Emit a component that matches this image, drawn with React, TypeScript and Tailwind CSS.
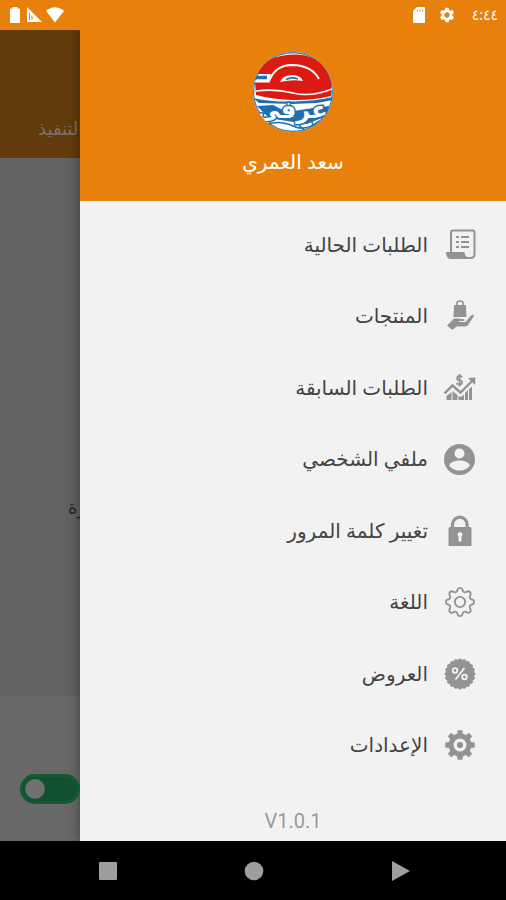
import type { ReactNode } from 'react';
import { BsGear } from 'react-icons/bs';
import { MdSettings } from 'react-icons/md';

interface MenuItem {
  id: string;
  label: string;
  icon: ReactNode;
}

const teeth = [0, 45, 90, 135, 180, 225, 270, 315];

// wavy edge of the offers badge
const badgePoints = Array.from({ length: 40 }, (_, i) => {
  const r = i % 2 === 0 ? 15.2 : 13.8;
  const a = (i * Math.PI) / 20;
  return `${(16 + r * Math.sin(a)).toFixed(2)},${(16 - r * Math.cos(a)).toFixed(2)}`;
}).join(' ');

function OrdersIcon() {
  return (
    <svg viewBox="0 0 32 32" className="size-8" fill="none" stroke="currentColor" strokeWidth="2">
      <path d="M7 23V3.5Q7 1.5 9 1.5H28.5Q30.5 1.5 30.5 3.5V25Q30.5 29 26.5 29H7" />
      <path d="M2 23H20.5Q20.5 27 23.5 28L25 30H7Q2 30 2 23Z" fill="currentColor" stroke="none" />
      <path d="M12 8h3M17 8h8M12 13h3M17 13h8M12 18h3M17 18h8" />
    </svg>
  );
}

function ProductsIcon() {
  return (
    <svg viewBox="0 0 32 32" className="size-8" fill="currentColor">
      <path d="M10 5H22L22.5 17H9.5Z" />
      <path d="M13 6V3Q13 1 16 1T19 3V6" fill="none" stroke="currentColor" strokeWidth="1.6" />
      <path d="M3 25.5L9 19.5Q11 17.8 14 18.5L19 19Q21 19.5 20.5 21H15V22H21.5L26.5 16Q28.5 14 30 15Q30 16 29 17.5L24 25Q23 26.5 21 26.5H12.5L8.5 30Z" />
    </svg>
  );
}

function HistoryIcon() {
  return (
    <svg viewBox="0 0 32 32" className="size-8" fill="currentColor">
      <path d="M2.5 28V24L7.5 20V28ZM8.5 28V19L13.5 23V28ZM14.5 28V24L17 25L20 22.5V28ZM21 28V21L24 18V28ZM25 28V17L28 14.5V28Z" />
      <path d="M0.5 21.5L8.5 13.5L16.5 20.5L28 9" fill="none" stroke="currentColor" strokeWidth="2.4" />
      <path d="M24 6L31.5 5.5L31 13Z" />
      <path
        d="M18 5.5Q17.5 4 15.5 4T13 6.2Q13 7.8 15.5 8.2T18 10.5Q18 12.5 15.5 12.5T12.8 10.8M15.5 2V14.5"
        fill="none"
        stroke="currentColor"
        strokeWidth="1.8"
      />
    </svg>
  );
}

function ProfileIcon() {
  return (
    <svg viewBox="0 0 32 32" className="size-8">
      <circle cx="15.5" cy="16.5" r="15.5" fill="currentColor" />
      <circle cx="15.5" cy="10.5" r="5" fill="#f2f2f2" />
      <path d="M5 22.5Q7.5 17.5 15.5 17.5T26 22.5Q22 27.5 15.5 27.5T5 22.5Z" fill="#f2f2f2" />
    </svg>
  );
}

function LockIcon() {
  return (
    <svg viewBox="0 0 32 32" className="size-8">
      <path d="M8.5 13V9.5a7.3 7.3 0 0 1 14.6 0V13" fill="none" stroke="currentColor" strokeWidth="3.2" />
      <rect x="4.5" y="12" width="23" height="19" rx="1.5" fill="currentColor" />
      <path d="M16 17a2.500 2.500 0 0 1 1.500 4.500v5h-3v-5a2.500 2.500 0 0 1 1.500-4.500Z" fill="#f2f2f2" />
    </svg>
  );
}

function OffersIcon() {
  return (
    <svg viewBox="0 0 32 32" className="size-8">
      <polygon points={badgePoints} fill="currentColor" stroke="currentColor" strokeLinejoin="round" />
      <g fill="none" stroke="#f2f2f2" strokeWidth="1.8">
        <circle cx="11" cy="12.5" r="2.3" />
        <circle cx="20.5" cy="19" r="2.3" />
        <path d="M20.5 10L11.5 21.5" />
      </g>
    </svg>
  );
}

function SettingsIcon() {
  return (
    <svg viewBox="0 0 32 32" className="size-8">
      <g fill="currentColor">
        <circle cx="16" cy="16" r="11.5" />
        {teeth.map(angle => (
          <path key={angle} d="M13 6L13.6 1.2H18.4L19 6Z" transform={`rotate(${angle} 16 16)`} />
        ))}
      </g>
      <circle cx="16" cy="16" r="4.8" fill="none" stroke="#f2f2f2" strokeWidth="3.4" />
    </svg>
  );
}

function Logo() {
  return (
    <svg viewBox="0 0 80 80" className="size-20" role="img" aria-label="شعار">
      <clipPath id="logo-clip">
        <circle cx="40" cy="40" r="40" />
      </clipPath>
      <g clipPath="url(#logo-clip)">
        <rect width="80" height="80" fill="#fff" />
        <circle cx="40" cy="40" r="39.5" fill="none" stroke="#2b7ab8" strokeWidth="1.5" />
        <path d="M4 22Q13 3 40 2.5T76 24Q80 34 78 44Q60 48.5 40 48T3 43L2 30H15L18 22Z" fill="#dd1a12" />
        <path d="M1 25.5H14" stroke="#1f6fae" strokeWidth="3.5" />
        <path d="M2 29.5H16Q22 13 39 13Q59 13.5 66 27" fill="none" stroke="#fff" strokeWidth="1.8" />
        <path d="M27 30Q30 23 39 23Q48 23.5 50 29Q39 27 27 30Z" fill="#fff" />
        <path d="M33 27.5Q39 24.5 45 27" fill="none" stroke="#1f6fae" strokeWidth="1.6" />
        <path d="M3 39Q22 36.5 40 41T79 37" fill="none" stroke="#fff" strokeWidth="1.6" />
        <path d="M0 46Q18 50 40 49.500T80 45V48L64 51L40 52L6 51Z" fill="#1f6fae" />
        <path d="M4 54L20 53L34 60L60 56L76 54L74 64L54 72L40 70L16 66Z" fill="#1f6fae" />
        <text
          x="39"
          y="66"
          textAnchor="middle"
          className="text-[24px] font-bold [paint-order:stroke]"
          fill="#fff"
          stroke="#1f6fae"
          strokeWidth="3"
        >
          عرفي
        </text>
        <path d="M14 72Q28 68 40 74T66 69M46 73L52 79M58 66L60 74" fill="none" stroke="#1f6fae" strokeWidth="1.5" />
      </g>
    </svg>
  );
}

const items: MenuItem[] = [
  { id: 'current', label: 'الطلبات الحالية', icon: <OrdersIcon /> },
  { id: 'products', label: 'المنتجات', icon: <ProductsIcon /> },
  { id: 'previous', label: 'الطلبات السابقة', icon: <HistoryIcon /> },
  { id: 'profile', label: 'ملفي الشخصي', icon: <ProfileIcon /> },
  { id: 'password', label: 'تغيير كلمة المرور', icon: <LockIcon /> },
  { id: 'language', label: 'اللغة', icon: <BsGear className="size-[30px]" /> },
  { id: 'offers', label: 'العروض', icon: <OffersIcon /> },
  { id: 'settings', label: 'الإعدادات', icon: <SettingsIcon /> },
];

function StatusBar() {
  return (
    <header className="flex h-[30px] items-center justify-between bg-[#e8810c] px-2 text-white">
      <div className="flex items-center gap-1">
        <svg viewBox="0 0 14 18" className="h-[18px] w-3.5" fill="currentColor">
          <path d="M4.5 1h5v1.5H12V17H2V2.5h2.5Z" />
        </svg>
        <svg viewBox="0 0 16 16" className="size-4" fill="currentColor">
          <path fillRule="evenodd" d="M1 0L16 15H1ZM3 5V13H4V6ZM5.5 8V13H6.5V9Z" />
        </svg>
        <svg viewBox="0 0 18 16" className="h-4 w-[18px]" fill="currentColor">
          <path d="M0 4Q9-3.5 18 4L9 15.5Z" />
        </svg>
      </div>
      <div className="flex items-center gap-3">
        <svg viewBox="0 0 14 16" className="h-4 w-3.5" fill="currentColor">
          <path fillRule="evenodd" d="M5 0H12Q13 0 13 1V15Q13 16 12 16H2Q1 16 1 15V4ZM5 3V4.5H6V3ZM7.5 2.5V4.5H8.5V2.5ZM10 2.5V4.5H11V2.5Z" />
        </svg>
        <MdSettings className="size-[18px]" />
        <time className="pl-1 text-sm">٤:٤٤</time>
      </div>
    </header>
  );
}

export default function App() {
  return (
    <div className="flex min-h-screen flex-col bg-black font-['Noto_Sans','DejaVu_Sans',sans-serif]">
      <StatusBar />
      <div className="flex flex-1 overflow-hidden">
        <main className="flex w-20 shrink-0 flex-col overflow-hidden whitespace-nowrap bg-[#626262]">
          <div className="flex h-32 items-end bg-[#633a0b] pb-4 pl-[38px]">
            <h1 className="text-lg font-medium text-[#7a736c]">قيد التنفيذ</h1>
          </div>
          <div className="flex flex-1 flex-col justify-center pl-[68px] pt-40">
            <p className="text-lg text-[#222222]">متوفرة</p>
          </div>
          <div className="flex h-[145px] items-center bg-[#686868] pl-5 pt-10">
            <label className="relative block h-[30px] w-[60px] shrink-0 rounded-full border-[3px] border-[#115a32] bg-[#11512d]">
              <input type="checkbox" aria-label="متاح" className="absolute inset-0 size-full appearance-none rounded-full" />
              <span className="m-0.5 block size-5 rounded-full bg-[#707070]" />
            </label>
          </div>
        </main>
        <aside dir="rtl" className="flex flex-1 flex-col bg-[#f2f2f2] shadow-[0_0_12px_rgba(0,0,0,0.4)]">
          <div className="flex h-[171px] flex-col items-center gap-4 bg-[#e8810c] pt-[22px] text-white">
            <Logo />
            <h2 className="text-xl font-medium">سعد العمري</h2>
          </div>
          <nav className="flex flex-1 flex-col pt-2">
            {items.map(item => (
              <a key={item.id} href={`#${item.id}`} className="flex flex-1 items-center gap-3.5 pr-7 text-xl text-[#444444]">
                <span className="flex w-9 justify-center text-[#939393]">{item.icon}</span>
                {item.label}
              </a>
            ))}
          </nav>
          <p className="flex h-[60px] items-center justify-center pt-5 font-[Roboto,sans-serif] text-xl text-[#999999]" dir="ltr">V1.0.1</p>
        </aside>
      </div>
      <footer className="grid h-[59px] grid-cols-[1fr_auto_1fr] items-center bg-black pl-[98px] pr-24 text-[#9e9e9e]">
        <button aria-label="التطبيقات الأخيرة" className="justify-self-start">
          <svg viewBox="0 0 20 20" className="size-5" fill="currentColor"><rect x="1" y="1" width="18" height="18" rx="1" /></svg>
        </button>
        <button aria-label="الرئيسية">
          <svg viewBox="0 0 20 20" className="size-5" fill="currentColor"><circle cx="10" cy="10" r="9.3" /></svg>
        </button>
        <button aria-label="رجوع" className="justify-self-end">
          <svg viewBox="0 0 20 20" className="size-5" fill="currentColor"><path d="M2 0L20 10L2 20Z" /></svg>
        </button>
      </footer>
    </div>
  );
}
